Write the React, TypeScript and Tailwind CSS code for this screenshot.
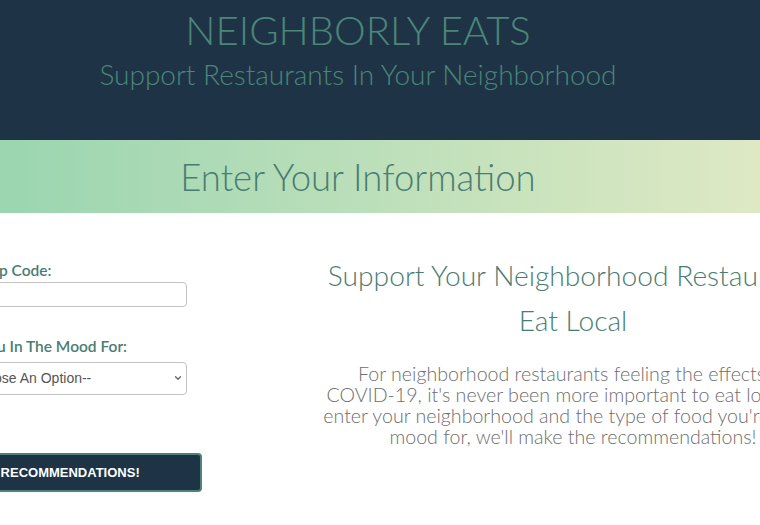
import { ChevronDown } from 'lucide-react';

export default function App() {
  return (
    <div className="w-full h-[525px] overflow-hidden bg-white" style={{ fontFamily: 'Lato, "Noto Sans", sans-serif' }}>
      {/* page is wider than the window, scrolled sideways */}
      <div className="w-[1116px] -ml-[200px]">
        {/* Header */}
        <header className="h-[140px] bg-[#1e3446] text-center pt-[6px]">
          <h1 className="text-[40px] leading-[48px] font-light text-[#4b8679]">NEIGHBORLY EATS</h1>
          <p className="mt-[3px] text-[28px] leading-[34px] font-light text-[#4b8679]">
            Support Restaurants In Your Neighborhood
          </p>
        </header>

        {/* Banner */}
        <div className="h-[73px] bg-gradient-to-r from-[#86d0ab] to-[#ebedc8] flex items-center justify-center">
          <h2 className="text-[36.5px] leading-[46px] font-light text-[#4a7d72]">Enter Your Information</h2>
        </div>

        <div className="flex">
          {/* Form */}
          <form className="w-[430px] pl-[111px] pt-[48px]" onSubmit={(e) => e.preventDefault()}>
            <label className="block text-[15.5px] leading-[18px] font-semibold text-[#4a7d72]">Enter Your Zip Code:</label>
            <input
              type="text"
              className="mt-[3px] ml-[40px] block w-[236px] h-[25px] border border-[#c2c2c2] rounded-[4px] bg-white px-2 text-sm outline-none"
            />

            <label className="mt-[30px] block text-[15.5px] leading-[18px] font-semibold text-[#4a7d72]">
              What Are You In The Mood For:
            </label>
            <div className="relative mt-[7px] ml-[40px] w-[236px] h-[33px]">
              <select
                className="appearance-none w-full h-full border border-[#c2c2c2] rounded-[4px] bg-white pl-[7px] text-[14px] text-[#555]"
                style={{ fontFamily: '"Liberation Sans", Arial, sans-serif' }}
                defaultValue=""
              >
                <option value="">--Choose An Option--</option>
                <option value="pizza">Pizza</option>
                <option value="mexican">Mexican</option>
                <option value="chinese">Chinese</option>
              </select>
              <ChevronDown
                className="absolute right-[4px] top-[11px] w-[10px] h-[10px] text-[#666] pointer-events-none"
                strokeWidth={3}
              />
            </div>

            <button
              type="submit"
              className="mt-[58px] -ml-[3px] block w-[294px] h-[39px] bg-[#1e3446] border-2 border-[#4a8577] rounded-[4px] text-white text-[13px] font-bold"
              style={{ fontFamily: '"Liberation Sans", Arial, sans-serif' }}
            >
              GET RECOMMENDATIONS!
            </button>
          </form>

          {/* Intro */}
          <div className="w-[686px] text-center pt-[40px]">
            <h3 className="text-[28.2px] leading-[45px] font-light text-[#4a7d72]">
              Support Your Neighborhood Restaurants
              <br />
              Eat Local
            </h3>
            <p className="mt-[20px] text-[19.6px] leading-[21px] font-light text-[#6e6e6e]">
              For neighborhood restaurants feeling the effects of
              <br />
              COVID-19, it's never been more important to eat locally. If
              <br />
              enter your neighborhood and the type of food you're in the
              <br />
              mood for, we'll make the recommendations!
            </p>
          </div>
        </div>
      </div>
    </div>
  );
}
